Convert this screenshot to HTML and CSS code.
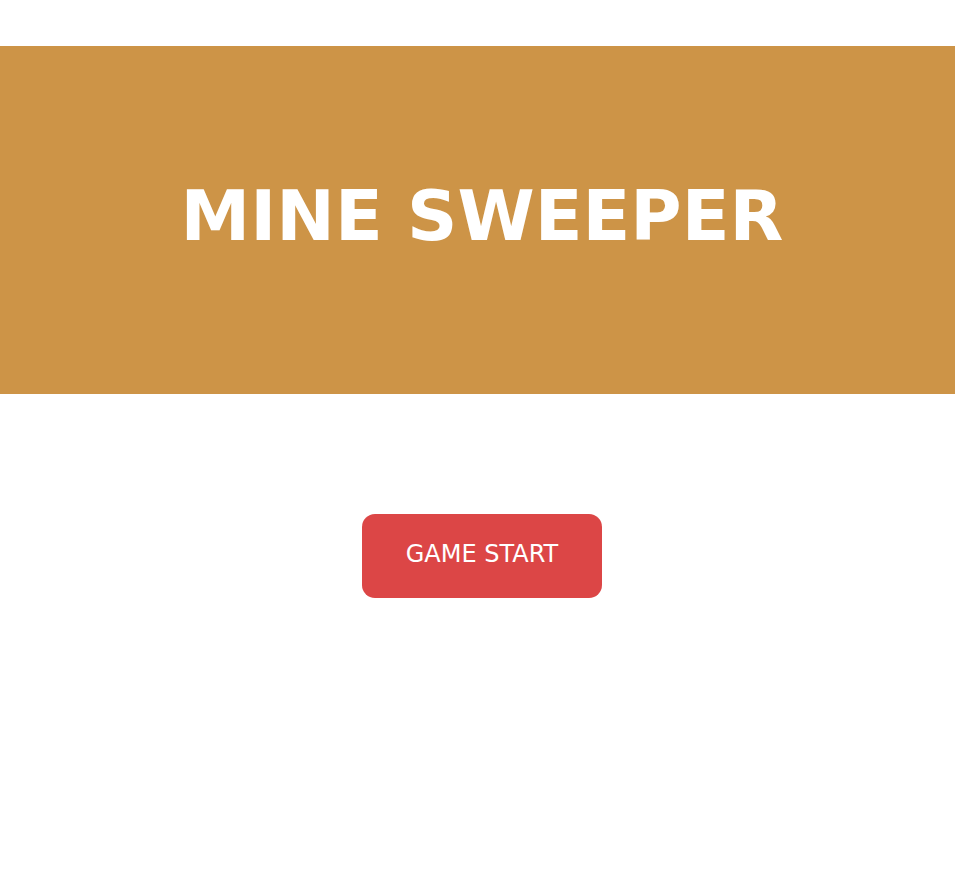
FILE: index.html
```html
<!DOCTYPE html>
<html>
<head>
<meta charset="utf-8">
<link rel="stylesheet" href="styles.css">
</head>
<body>
<header class="banner">
  <h1 class="title">MINE SWEEPER</h1>
</header>
<main class="content">
  <button class="start-btn">GAME START</button>
</main>
</body>
</html>
```
FILE: styles.css
```css
html, body {
  margin: 0;
  padding: 0;
  background: #ffffff;
  font-family: "DejaVu Sans", Verdana, sans-serif;
}
.banner {
  margin-top: 46px;
  height: 348px;
  background: #cd9447;
  display: flex;
  align-items: center;
  justify-content: center;
  padding-left: 9px;
}
.title {
  margin: 0 0 8px 0;
  color: #ffffff;
  font-size: 70px;
  font-weight: bold;
  line-height: 1;
}
.content {
  display: flex;
  justify-content: center;
  padding-top: 120px;
  padding-left: 9px;
}
.start-btn {
  width: 240px;
  height: 84px;
  border: none;
  border-radius: 13px;
  background: #dc4646;
  color: #ffffff;
  font-family: "DejaVu Sans", Verdana, sans-serif;
  font-size: 24px;
  padding: 0 0 4px 0;
}
```
